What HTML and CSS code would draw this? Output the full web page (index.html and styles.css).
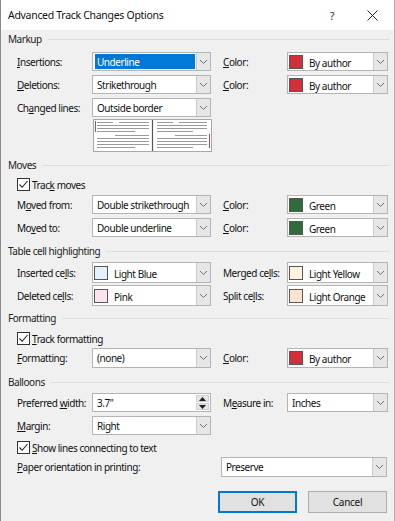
FILE: index.html
```html
<!DOCTYPE html>
<html>
<head>
<meta charset="utf-8">
<link rel="stylesheet" href="styles.css">
</head>
<body>
<div class="dialog">
  <div class="titlebar">
    <span class="title">Advanced Track Changes Options</span>
    <span class="help">?</span>
    <span class="close"><svg width="11" height="11" viewBox="0 0 11 11"><path d="M0.5 0.5 L10.5 10.5 M10.5 0.5 L0.5 10.5" stroke="#222" stroke-width="1"/></svg></span>
  </div>

  <div class="head h-markup"><span>Markup</span></div>
  <div class="rows r-markup">
    <div class="row">
      <span class="lbl"><u>I</u>nsertions:</span>
      <div class="combo"><span class="val"><span class="sel">Underline</span></span><span class="btn"><svg width="7" height="4" viewBox="0 0 7 4"><polyline points="0,0 3.5,3.5 7,0" fill="none" stroke="#707070"/></svg></span></div>
      <span class="lbl lbl-r"><u>C</u>olor:</span>
      <div class="combo"><span class="sw red"></span><span class="val">By author</span><span class="btn"><svg width="7" height="4" viewBox="0 0 7 4"><polyline points="0,0 3.5,3.5 7,0" fill="none" stroke="#707070"/></svg></span></div>
    </div>
    <div class="row">
      <span class="lbl"><u>D</u>eletions:</span>
      <div class="combo"><span class="val">Strikethrough</span><span class="btn"><svg width="7" height="4" viewBox="0 0 7 4"><polyline points="0,0 3.5,3.5 7,0" fill="none" stroke="#707070"/></svg></span></div>
      <span class="lbl lbl-r"><u>C</u>olor:</span>
      <div class="combo"><span class="sw red"></span><span class="val">By author</span><span class="btn"><svg width="7" height="4" viewBox="0 0 7 4"><polyline points="0,0 3.5,3.5 7,0" fill="none" stroke="#707070"/></svg></span></div>
    </div>
    <div class="row">
      <span class="lbl">Ch<u>a</u>nged lines:</span>
      <div class="combo"><span class="val">Outside border</span><span class="btn"><svg width="7" height="4" viewBox="0 0 7 4"><polyline points="0,0 3.5,3.5 7,0" fill="none" stroke="#707070"/></svg></span></div>
    </div>
  </div>
  <div class="preview">
    <svg width="119" height="33" viewBox="0 0 119 33">
      <rect x="0.5" y="0.5" width="118" height="32" fill="#fff" stroke="#a8a8a8"/>
      <g stroke="#9a9a9a" stroke-width="1">
        <path d="M4 3.5 H20 M26 3.5 H56 M4 6.5 H56 M4 9.5 H56 M4 12.5 H42 M22 16.5 H56 M4 19.5 H56 M4 22.5 H56 M4 25.5 H56 M4 28.5 H42"/>
        <path d="M64 3.5 H80 M86 3.5 H114 M64 6.5 H114 M64 9.5 H114 M64 12.5 H100 M82 16.5 H114 M64 19.5 H114 M64 22.5 H114 M64 25.5 H114 M64 28.5 H100"/>
      </g>
      <line x1="59.5" y1="1" x2="59.5" y2="32" stroke="#555" stroke-width="1.2"/>
      <line x1="2.5" y1="2" x2="2.5" y2="13" stroke="#d04050" stroke-width="1"/>
      <line x1="116.5" y1="15" x2="116.5" y2="29" stroke="#d04050" stroke-width="1"/>
    </svg>
  </div>

  <div class="head h-moves"><span>Moves</span></div>
  <div class="check c-moves"><span class="cb"><svg width="11" height="11" viewBox="0 0 11 11"><polyline points="1.5,5.5 4.2,8.3 9.5,2" fill="none" stroke="#222" stroke-width="1.1"/></svg></span><span>Trac<u>k</u> moves</span></div>
  <div class="rows r-moves">
    <div class="row">
      <span class="lbl">M<u>o</u>ved from:</span>
      <div class="combo"><span class="val">Double strikethrough</span><span class="btn"><svg width="7" height="4" viewBox="0 0 7 4"><polyline points="0,0 3.5,3.5 7,0" fill="none" stroke="#707070"/></svg></span></div>
      <span class="lbl lbl-r"><u>C</u>olor:</span>
      <div class="combo"><span class="sw green"></span><span class="val">Green</span><span class="btn"><svg width="7" height="4" viewBox="0 0 7 4"><polyline points="0,0 3.5,3.5 7,0" fill="none" stroke="#707070"/></svg></span></div>
    </div>
    <div class="row">
      <span class="lbl">Mo<u>v</u>ed to:</span>
      <div class="combo"><span class="val">Double underline</span><span class="btn"><svg width="7" height="4" viewBox="0 0 7 4"><polyline points="0,0 3.5,3.5 7,0" fill="none" stroke="#707070"/></svg></span></div>
      <span class="lbl lbl-r"><u>C</u>olor:</span>
      <div class="combo"><span class="sw green"></span><span class="val">Green</span><span class="btn"><svg width="7" height="4" viewBox="0 0 7 4"><polyline points="0,0 3.5,3.5 7,0" fill="none" stroke="#707070"/></svg></span></div>
    </div>
  </div>

  <div class="head h-table"><span>Table cell highlighting</span></div>
  <div class="rows r-table">
    <div class="row tall">
      <span class="lbl">Inserted ce<u>l</u>ls:</span>
      <div class="combo"><span class="sw lblue"></span><span class="val">Light Blue</span><span class="btn"><svg width="7" height="4" viewBox="0 0 7 4"><polyline points="0,0 3.5,3.5 7,0" fill="none" stroke="#707070"/></svg></span></div>
      <span class="lbl lbl-r">Merged ce<u>l</u>ls:</span>
      <div class="combo"><span class="sw lyellow"></span><span class="val">Light Yellow</span><span class="btn"><svg width="7" height="4" viewBox="0 0 7 4"><polyline points="0,0 3.5,3.5 7,0" fill="none" stroke="#707070"/></svg></span></div>
    </div>
    <div class="row tall">
      <span class="lbl">Deleted ce<u>l</u>ls:</span>
      <div class="combo"><span class="sw pink"></span><span class="val">Pink</span><span class="btn"><svg width="7" height="4" viewBox="0 0 7 4"><polyline points="0,0 3.5,3.5 7,0" fill="none" stroke="#707070"/></svg></span></div>
      <span class="lbl lbl-r">Split ce<u>l</u>ls:</span>
      <div class="combo"><span class="sw lorange"></span><span class="val">Light Orange</span><span class="btn"><svg width="7" height="4" viewBox="0 0 7 4"><polyline points="0,0 3.5,3.5 7,0" fill="none" stroke="#707070"/></svg></span></div>
    </div>
  </div>

  <div class="head h-format"><span>Formatting</span></div>
  <div class="check c-format"><span class="cb"><svg width="11" height="11" viewBox="0 0 11 11"><polyline points="1.5,5.5 4.2,8.3 9.5,2" fill="none" stroke="#222" stroke-width="1.1"/></svg></span><span><u>T</u>rack formatting</span></div>
  <div class="rows r-format">
    <div class="row mid">
      <span class="lbl"><u>F</u>ormatting:</span>
      <div class="combo"><span class="val">(none)</span><span class="btn"><svg width="7" height="4" viewBox="0 0 7 4"><polyline points="0,0 3.5,3.5 7,0" fill="none" stroke="#707070"/></svg></span></div>
      <span class="lbl lbl-r"><u>C</u>olor:</span>
      <div class="combo"><span class="sw red"></span><span class="val">By author</span><span class="btn"><svg width="7" height="4" viewBox="0 0 7 4"><polyline points="0,0 3.5,3.5 7,0" fill="none" stroke="#707070"/></svg></span></div>
    </div>
  </div>

  <div class="head h-balloons"><span>Balloons</span></div>
  <div class="rows r-balloons">
    <div class="row">
      <span class="lbl">Preferred <u>w</u>idth:</span>
      <div class="combo spin"><span class="val">3.7"</span><span class="spinbtns"><span class="sb"><svg width="7" height="4" viewBox="0 0 7 4"><polygon points="0,4 3.5,0 7,4" fill="#222"/></svg></span><span class="sb"><svg width="7" height="4" viewBox="0 0 7 4"><polygon points="0,0 3.5,4 7,0" fill="#222"/></svg></span></span></div>
      <span class="lbl lbl-r">M<u>e</u>asure in:</span>
      <div class="combo"><span class="val">Inches</span><span class="btn"><svg width="7" height="4" viewBox="0 0 7 4"><polyline points="0,0 3.5,3.5 7,0" fill="none" stroke="#707070"/></svg></span></div>
    </div>
    <div class="row">
      <span class="lbl"><u>M</u>argin:</span>
      <div class="combo"><span class="val">Right</span><span class="btn"><svg width="7" height="4" viewBox="0 0 7 4"><polyline points="0,0 3.5,3.5 7,0" fill="none" stroke="#707070"/></svg></span></div>
    </div>
  </div>
  <div class="check c-lines"><span class="cb"><svg width="11" height="11" viewBox="0 0 11 11"><polyline points="1.5,5.5 4.2,8.3 9.5,2" fill="none" stroke="#222" stroke-width="1.1"/></svg></span><span><u>S</u>how lines connecting to text</span></div>
  <div class="paper">
    <span class="lbl"><u>P</u>aper orientation in printing:</span>
    <div class="combo wide"><span class="val">Preserve</span><span class="btn"><svg width="7" height="4" viewBox="0 0 7 4"><polyline points="0,0 3.5,3.5 7,0" fill="none" stroke="#707070"/></svg></span></div>
  </div>
  <div class="buttons">
    <button class="b ok">OK</button>
    <button class="b">Cancel</button>
  </div>
</div>
</body>
</html>
```

FILE: styles.css
```css
* { box-sizing: border-box; }
html, body { margin: 0; padding: 0; }
body {
  font-family: "Noto Sans", "Open Sans", sans-serif;
  font-size: 10px;
  letter-spacing: -0.45px;
  color: #111;
  background: #f0f0f0;
}
u { text-decoration: underline; text-underline-offset: 1px; }
.dialog {
  width: 395px;
  height: 521px;
  background: #f0f0f0;
  border-left: 1px solid #8a8a8a;
  border-right: 1px solid #b0b0b0;
  overflow: hidden;
}
.titlebar {
  height: 30px;
  background: #fff;
  display: flex;
  align-items: center;
  padding-left: 7px;
}
.title { font-size: 10.5px; letter-spacing: -0.3px; flex: 1; color: #111; }
.help { font-size: 11px; width: 40px; margin-right: 0; color: #333; text-align: center; }
.close { width: 40px; display: flex; justify-content: center; margin-right: 2px; }

.head {
  height: 18px;
  display: flex;
  align-items: center;
  padding-left: 7px;
  padding-right: 5px;
  color: #222;
}
.head::after {
  content: "";
  flex: 1;
  border-top: 1px solid #dcdcdc;
  margin-left: 6px;
}
.rows { display: flex; flex-direction: column; gap: 4px; }
.row {
  display: grid;
  grid-template-columns: 75px 119px 76px 101px;
  padding-left: 16px;
  height: 19px;
  align-items: stretch;
}
.row.tall { height: 21px; }
.row.mid { height: 20px; }
.r-table { gap: 2px; }
.lbl { display: block; align-self: center; white-space: nowrap; }
.lbl-r { padding-left: 12px; }

.combo {
  display: flex;
  align-items: stretch;
  background: #fff;
  border: 1px solid #b4b4b4;
}
.val {
  flex: 1;
  display: flex;
  align-items: center;
  padding-left: 4px;
  white-space: nowrap;
  overflow: hidden;
}
.sel {
  background: #0078d7;
  color: #fff;
  align-self: stretch;
  display: flex;
  align-items: center;
  margin: 1px 1px 1px -2px;
  padding-left: 2px;
  flex: 1;
}
.btn {
  width: 14px;
  background: #e6e6e6;
  border-left: 1px solid #cdcdcd;
  display: flex;
  align-items: center;
  justify-content: center;
}
.sw {
  width: 14px;
  height: 14px;
  align-self: center;
  margin-left: 1px;
  border: 1px solid #555;
}
.sw + .val { padding-left: 6px; padding-top: 2px; }
.red { background: #d2313c; }
.green { background: #2f6b3b; }
.lblue { background: #e2f1fb; }
.pink { background: #fde3ef; }
.lyellow { background: #fff5de; }
.lorange { background: #fde2cd; }

.preview { margin: 2px 0 0 92px; height: 33px; }
.preview svg { display: block; }

.check {
  display: flex;
  align-items: center;
  gap: 2px;
  padding-left: 16px;
  height: 13px;
}
.cb {
  width: 13px;
  height: 13px;
  border: 1px solid #333;
  background: #fff;
  display: flex;
  align-items: center;
  justify-content: center;
}
.r-markup { margin-top: 4px; }
.h-moves { margin-top: 4px; }
.c-moves { margin-top: 4px; }
.r-moves { margin-top: 4px; }
.h-table { margin-top: 5px; }
.r-table { margin-top: 2px; }
.h-format { margin-top: 3px; }
.c-format { margin-top: 5px; }
.r-format { margin-top: 3px; }
.h-balloons { margin-top: 5px; }
.r-balloons { margin-top: 2px; }
.c-lines { margin-top: 6px; }

.spinbtns {
  width: 15px;
  display: flex;
  flex-direction: column;
  padding: 1px;
  gap: 1px;
  background: #fff;
}
.sb {
  flex: 1;
  background: #e6e6e6;
  border: 1px solid #d0d0d0;
  display: flex;
  align-items: center;
  justify-content: center;
}

.paper {
  display: flex;
  height: 20px;
  margin-top: 3px;
  padding-left: 16px;
  padding-right: 7px;
}
.paper .lbl { flex: 1; }
.combo.wide { width: 166px; }

.buttons {
  display: flex;
  justify-content: flex-end;
  gap: 11px;
  margin-top: 14px;
  padding-right: 7px;
}
.b {
  width: 79px;
  height: 22px;
  background: #e1e1e1;
  border: 1px solid #adadad;
  font-family: "Noto Sans", "Open Sans", sans-serif;
  font-size: 10px;
  letter-spacing: -0.3px;
  color: #111;
  padding: 0;
}
.b.ok { border: 1px solid #0078d7; box-shadow: inset 0 0 0 1px #0078d7; }
```
